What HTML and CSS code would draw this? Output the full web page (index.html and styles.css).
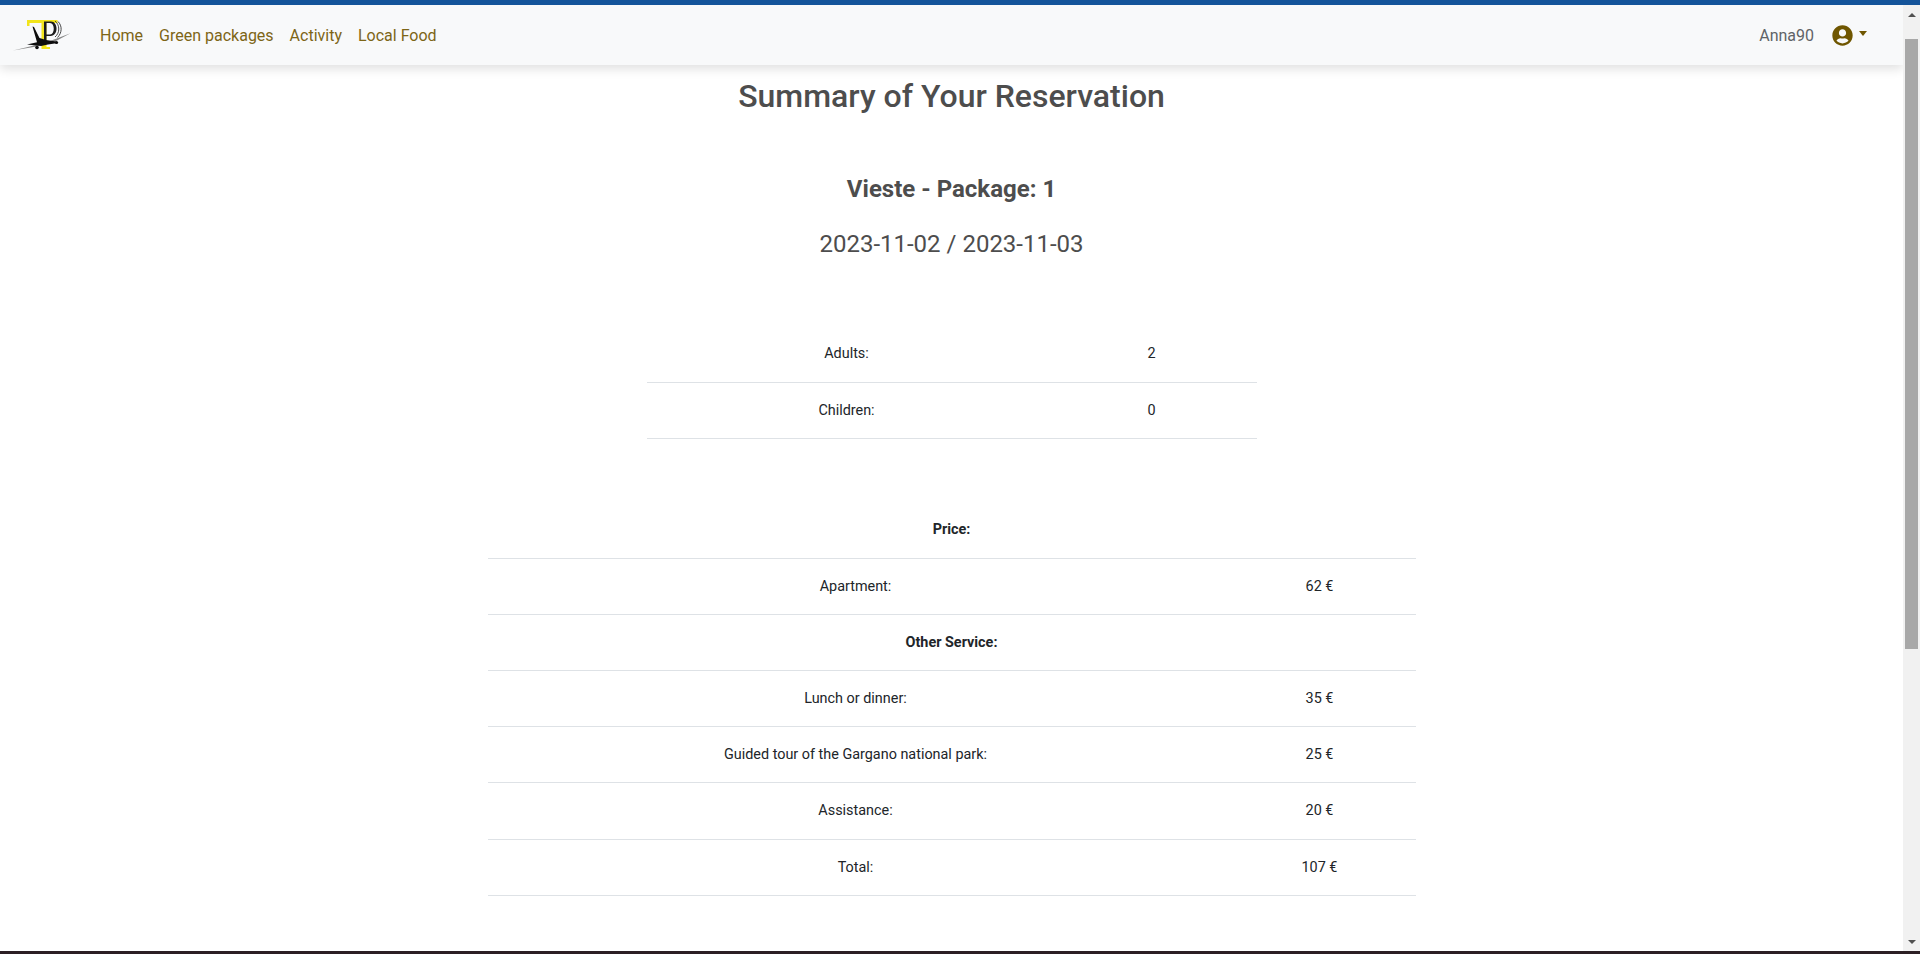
FILE: index.html
```html
<!DOCTYPE html>
<html lang="en">
<head>
<meta charset="utf-8">
<title>Summary of Your Reservation</title>
<link rel="stylesheet" href="styles.css">
</head>
<body>
<div class="stripe"></div>
<div class="shell">
  <div class="page">
    <nav class="navbar">
      <svg class="logo" width="60" height="40" viewBox="12 15 60 40">
        <path d="M27 20H57.500V23H46.500V47H50V49H41.500V23H29.500V26H27Z" fill="#f2e41a"/>
        <path d="M44 21.500H51C58 21.500 59 35.500 50.500 36H46.500V41H44ZM46.500 23V34.500H50C55 34.500 55 23 50 23Z" fill="#1c1c1c"/>
        <path d="M55 21C60 25 60 33 55 37M58 21.500C62.500 26 62 33 57.500 37.500" fill="none" stroke="#333" stroke-width=".9"/>
        <path d="M13 50.500L30 46.500 50 41 70.500 33.200 55 41.500 35 46.800Z" fill="#888"/>
        <path d="M32.500 26.500L34 27 39.500 38 46 40 56 41.500 58 43 48 44.500 41 46 37 45.500 27 44.500 37 42.300Z" fill="#0d0d0d"/>
        <circle cx="37" cy="47.500" r="1.800" fill="#0d0d0d"/>
        <circle cx="56.500" cy="42.500" r="1.600" fill="#0d0d0d"/>
      </svg>
      <ul class="nav-links">
        <li><a href="#">Home</a></li>
        <li><a href="#">Green packages</a></li>
        <li><a href="#">Activity</a></li>
        <li><a href="#">Local Food</a></li>
      </ul>
      <div class="user">
        <span class="username">Anna90</span>
        <svg class="avatar" width="21" height="21" viewBox="0 0 496 512">
          <path fill="#6f5600" d="M248 8C111 8 0 119 0 256s111 248 248 248 248-111 248-248S385 8 248 8zm0 96c48.600 0 88 39.400 88 88s-39.400 88-88 88-88-39.400-88-88 39.400-88 88-88zm0 344c-58.700 0-111.300-26.600-146.500-68.200 18.800-35.400 55.600-59.800 98.500-59.800 2.400 0 4.800.4 7.100 1.100 13 4.200 26.600 6.900 40.900 6.900 14.300 0 28-2.700 40.900-6.900 2.300-.7 4.700-1.100 7.100-1.100 42.900 0 79.700 24.400 98.500 59.800C359.300 421.400 306.700 448 248 448z"/>
        </svg>
        <span class="caret"></span>
      </div>
    </nav>
    <main class="content">
      <h1 class="title">Summary of Your Reservation</h1>
      <h2 class="package">Vieste - Package: 1</h2>
      <p class="dates">2023-11-02 / 2023-11-03</p>
      <table class="table guests">
        <colgroup><col class="guests-label"><col></colgroup>
        <tr><td>Adults:</td><td>2</td></tr>
        <tr><td>Children:</td><td>0</td></tr>
      </table>
      <table class="table prices">
        <colgroup><col class="prices-label"><col></colgroup>
        <tr><td colspan="2"><b>Price:</b></td></tr>
        <tr><td>Apartment:</td><td>62 €</td></tr>
        <tr><td colspan="2"><b>Other Service:</b></td></tr>
        <tr><td>Lunch or dinner:</td><td>35 €</td></tr>
        <tr><td>Guided tour of the Gargano national park:</td><td>25 €</td></tr>
        <tr><td>Assistance:</td><td>20 €</td></tr>
        <tr><td>Total:</td><td>107 €</td></tr>
      </table>
    </main>
  </div>
  <div class="scrollbar">
    <span class="arrow-up"></span>
    <div class="track"><div class="thumb"></div></div>
    <span class="arrow-down"></span>
  </div>
</div>
<div class="footer-edge"></div>
</body>
</html>
```
FILE: styles.css
```css
* { box-sizing: border-box; }
html, body { height: 100%; }
body {
  margin: 0;
  display: flex;
  flex-direction: column;
  overflow: hidden;
  background: #fff;
  font-family: Roboto, "Liberation Sans", sans-serif;
  font-size: 14.4px;
  color: #212529;
}
.stripe { height: 5px; background: #14549a; flex: none; }
.shell { flex: 1; display: flex; min-height: 0; }
.page { flex: 1; min-width: 0; overflow: hidden; }
.navbar {
  height: 60px;
  display: flex;
  align-items: center;
  padding: 0 36px 0 12px;
  background: #f8f9fa;
  box-shadow: 0 4px 10px rgba(0,0,0,.12);
  position: relative;
}
.logo { flex: none; margin-right: 28px; }
.nav-links { display: flex; list-style: none; margin: 2px 0 0; padding: 0; gap: 16px; flex: 1; }
.nav-links a { color: #7d6516; text-decoration: none; font-size: 16px; line-height: 24px; display: block; }
.user { display: flex; align-items: center; }
.username { font-size: 16px; color: #5f6367; margin-right: 18px; }
.avatar { display: block; }
.caret {
  margin-left: 6px;
  margin-bottom: 3px;
  border-top: 5px solid #6f5600;
  border-left: 4px solid transparent;
  border-right: 4px solid transparent;
}
.content { text-align: center; }
.title { font-size: 32px; font-weight: 500; line-height: 38px; color: #4d4d4d; margin: 12px 0 0; }
.package { font-size: 24px; font-weight: 700; line-height: 29px; color: #4d4d4d; margin: 60px 0 0; }
.dates { font-size: 24px; line-height: 29px; color: #4d4d4d; margin: 26px 0 0; }
.table { border-collapse: collapse; margin: 0 auto; table-layout: fixed; }
.table td { height: 56.2px; border-bottom: 1px solid #dee2e6; text-align: center; vertical-align: middle; padding: 0; }
.guests { width: 610px; margin-top: 67px; }
.guests-label { width: 400px; }
.prices { width: 928px; margin-top: 63px; }
.prices-label { width: 736px; }
.scrollbar { width: 17px; flex: none; background: #f1f1f1; display: flex; flex-direction: column; align-items: center; }
.track { flex: 1; width: 100%; padding: 0 2px; }
.thumb { height: 610px; margin-top: 22px; background: #a8a8a8; }
.arrow-up { margin-top: 8px; border-bottom: 4px solid #505050; border-left: 4px solid transparent; border-right: 4px solid transparent; }
.arrow-down { margin-bottom: 7px; border-top: 4px solid #505050; border-left: 4px solid transparent; border-right: 4px solid transparent; }
.footer-edge { height: 3px; background: #2c1f24; flex: none; }
```
